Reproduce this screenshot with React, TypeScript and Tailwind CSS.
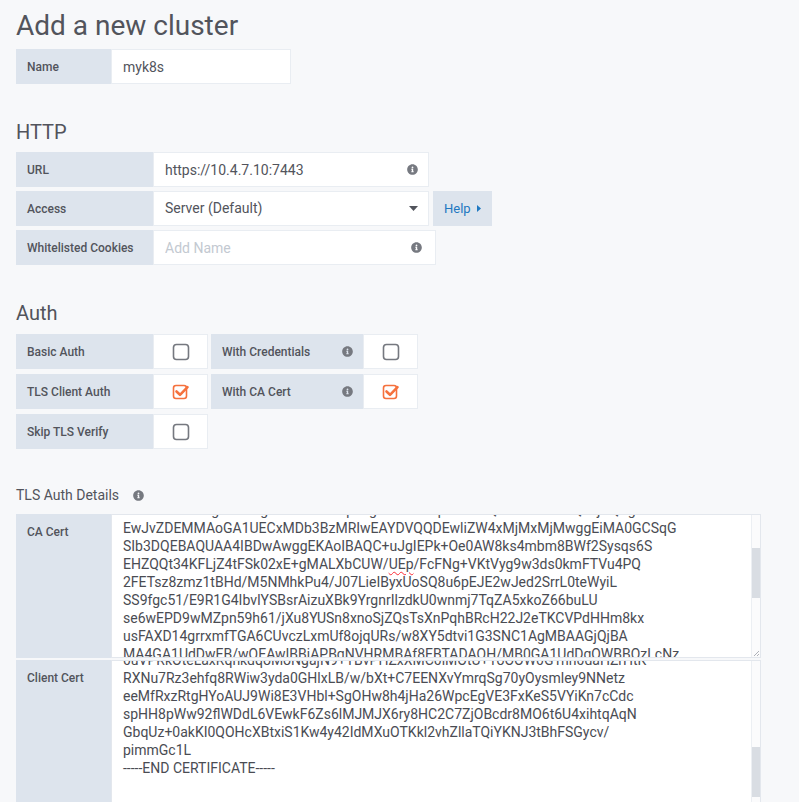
import { FaInfoCircle } from "react-icons/fa";

const caLines = [
  "MIIC+zCCAeOgAwIBAgIJAMV2eVuqi7ZgMA0GCSqGSIb3DQEBCwUAMBQxEjAQBgNV",
  "EwJvZDEMMAoGA1UECxMDb3BzMRIwEAYDVQQDEwliZW4xMjMxMjMwggEiMA0GCSqG",
  "SIb3DQEBAQUAA4IBDwAwggEKAoIBAQC+uJgIEPk+Oe0AW8ks4mbm8BWf2Sysqs6S",
  "EHZQQt34KFLjZ4tFSk02xE+gMALXbCUW/__UEp__/FcFNg+VKtVyg9w3ds0kmFTVu4PQ",
  "2FETsz8zmz1tBHd/M5NMhkPu4/J07LieIByxUoSQ8u6pEJE2wJed2SrrL0teWyiL",
  "SS9fgc51/E9R1G4IbvIYSBsrAizuXBk9YrgnrIlzdkU0wnmj7TqZA5xkoZ66buLU",
  "se6wEPD9wMZpn59h61/jXu8YUSn8xnoSjZQsTsXnPqhBRcH22J2eTKCVPdHHm8kx",
  "usFAXD14grrxmfTGA6CUvczLxmUf8ojqURs/w8XY5dtvi1G3SNC1AgMBAAGjQjBA",
  "MA4GA1UdDwEB/wQEAwIBBjAPBgNVHRMBAf8EBTADAQH/MB0GA1UdDgQWBBQzLcNz",
];

const clientLines = [
  "0uVPRkOteLaxRqhkdqoMoNgajN9+TBvPHZxXMC0iMOtU+1oOOW0GTnh0daHZrHtK",
  "RXNu7Rz3ehfq8RWiw3yda0GHlxLB/w/bXt+C7EENXvYmrqSg70yOysmley9NNetz",
  "eeMfRxzRtgHYoAUJ9Wi8E3VHbl+SgOHw8h4jHa26WpcEgVE3FxKeS5VYiKn7cCdc",
  "spHH8pWw92flWDdL6VEwkF6Zs6lMJMJX6ry8HC2C7ZjOBcdr8MO6t6U4xihtqAqN",
  "GbqUz+0akKI0QOHcXBtxiS1Kw4y42IdMXuOTKkl2vhZllaTQiYKNJ3tBhFSGycv/",
  "pimmGc1L",
  "-----END CERTIFICATE-----",
];

const label =
  "flex items-center bg-[#dde4ed] px-[11px] text-[12px] font-medium text-[#52545c] shrink-0 whitespace-nowrap";
const field =
  "h-full bg-white border border-[#e9edf2] pl-[11px] text-[14px] text-[#52545c] outline-none placeholder:text-[#c3c9d1]";

const Info = () => <FaInfoCircle size={11} color="#767980" />;

const Checkbox = ({ checked }: { checked?: boolean }) =>
  checked ? (
    <svg width="18" height="18" viewBox="0 0 18 18">
      <rect x="1.5" y="2.5" width="13" height="13" rx="2.5" fill="white" stroke="#f5713d" strokeWidth="1.6" />
      <path d="M4.5 8.5 L8 11.8 L15.5 4.2" fill="none" stroke="#f5713d" strokeWidth="2.6" strokeLinecap="round" strokeLinejoin="round" />
    </svg>
  ) : (
    <svg width="18" height="18" viewBox="0 0 18 18">
      <rect x="1.5" y="1.5" width="15" height="15" rx="3" fill="white" stroke="#75787f" strokeWidth="1.6" />
    </svg>
  );

const renderLine = (l: string, i: number) => {
  if (l.includes("__")) {
    const [a, b, c] = l.split("__");
    return (
      <div key={i} className="whitespace-pre">
        {a}
        <span className="underline decoration-wavy decoration-red-500 decoration-1 underline-offset-2">{b}</span>
        {c}
      </div>
    );
  }
  return (
    <div key={i} className="whitespace-pre">
      {l}
    </div>
  );
};

const CertBox = ({
  title,
  lines,
  offset,
  thumbTop,
  height,
}: {
  title: string;
  lines: string[];
  offset: string;
  thumbTop: string;
  height: string;
}) => (
  <div className={`flex ${height}`}>
    <div className={`${label} w-[95px] items-start pt-[9px] leading-[18px]`}>{title}</div>
    <div className="flex w-[650px] bg-white border border-[#e3e7ed]">
      <div className="flex-1 overflow-hidden pl-[11px] text-[14px] leading-[18px] text-[#4a4c53]">
        <div className={offset}>{lines.map(renderLine)}</div>
      </div>
      <div className="flex w-[9px] flex-col border-l border-[#eceff3] bg-[#fbfbfc]">
        <div className={`${thumbTop} h-[50px] w-full bg-[#d9dde3]`} />
        <div className="mt-auto flex h-[8px] items-end justify-end">
          <svg width="7" height="7" viewBox="0 0 7 7">
            <path d="M6 1 L1 6 M6 4 L4 6" stroke="#9a9ea6" strokeWidth="0.8" />
          </svg>
        </div>
      </div>
    </div>
  </div>
);

export default function App() {
  return (
    <div className="h-screen overflow-hidden bg-[#f7f8fa] px-4 pt-[9px] font-['Roboto',sans-serif] text-[#52545c]">
      <h1 className="text-[28px] leading-[34px] font-normal">Add a new cluster</h1>

      <div className="mt-[6px] flex h-[35px]">
        <div className={`${label} w-[95px]`}>Name</div>
        <input className={`${field} w-[180px]`} defaultValue="myk8s" />
      </div>

      {/* HTTP */}
      <h3 className="mt-[36px] text-[20px] leading-[24px] font-normal">HTTP</h3>
      <div className="mt-[8px] flex flex-col gap-[4px]">
        <div className="flex h-[35px]">
          <div className={`${label} w-[137px]`}>URL</div>
          <div className="relative flex h-full w-[276px]">
            <input className={`${field} w-full`} defaultValue="https://10.4.7.10:7443" />
            <span className="absolute right-[11px] top-[12px]">
              <Info />
            </span>
          </div>
        </div>
        <div className="flex h-[35px]">
          <div className={`${label} w-[137px]`}>Access</div>
          <div className="flex h-full w-[276px] items-center justify-between border border-[#e9edf2] bg-white pl-[11px] pr-[10px] text-[14px]">
            <span>Server (Default)</span>
            <svg width="9" height="5" viewBox="0 0 9 5">
              <path d="M0 0 L9 0 L4.5 5 Z" fill="#52545c" />
            </svg>
          </div>
          <div className="ml-[4px] flex w-[59px] items-center gap-[6px] bg-[#dde4ed] pl-[11px] text-[13px] text-[#1f78c1]">
            Help
            <svg width="4" height="7" viewBox="0 0 4 7">
              <path d="M0 0 L4 3.5 L0 7 Z" fill="#1f78c1" />
            </svg>
          </div>
        </div>
        <div className="flex h-[35px]">
          <div className={`${label} w-[137px]`}>Whitelisted Cookies</div>
          <div className="relative flex h-full w-[283px]">
            <input className={`${field} w-full`} placeholder="Add Name" />
            <span className="absolute right-[14px] top-[12px]">
              <Info />
            </span>
          </div>
        </div>
      </div>

      {/* Auth */}
      <h3 className="mt-[36px] text-[20px] leading-[24px] font-normal">Auth</h3>
      <div className="mt-[9px] flex flex-col gap-[5px]">
        <div className="flex h-[35px]">
          <div className={`${label} w-[137px]`}>Basic Auth</div>
          <div className="flex w-[55px] items-center justify-center border border-[#e9edf2] bg-white">
            <Checkbox />
          </div>
          <div className={`${label} ml-[3px] w-[152px] justify-between pr-[10px]`}>
            With Credentials
            <Info />
          </div>
          <div className="flex w-[55px] items-center justify-center border border-[#e9edf2] bg-white">
            <Checkbox />
          </div>
        </div>
        <div className="flex h-[35px]">
          <div className={`${label} w-[137px]`}>TLS Client Auth</div>
          <div className="flex w-[55px] items-center justify-center border border-[#e9edf2] bg-white">
            <Checkbox checked />
          </div>
          <div className={`${label} ml-[3px] w-[152px] justify-between pr-[10px]`}>
            With CA Cert
            <Info />
          </div>
          <div className="flex w-[55px] items-center justify-center border border-[#e9edf2] bg-white">
            <Checkbox checked />
          </div>
        </div>
        <div className="flex h-[35px]">
          <div className={`${label} w-[137px]`}>Skip TLS Verify</div>
          <div className="flex w-[55px] items-center justify-center border border-[#e9edf2] bg-white">
            <Checkbox />
          </div>
        </div>
      </div>

      {/* TLS details */}
      <div className="mt-[36px] flex items-center gap-[14px] text-[14px] leading-[20px]">
        TLS Auth Details
        <Info />
      </div>
      <div className="mt-[9px] flex flex-col gap-[2px]">
        <CertBox title="CA Cert" lines={caLines} offset="-mt-[14px]" thumbTop="mt-[33px]" height="h-[144px]" />
        <CertBox title="Client Cert" lines={clientLines} offset="-mt-[10px]" thumbTop="mt-[86px]" height="h-[170px]" />
      </div>
    </div>
  );
}
